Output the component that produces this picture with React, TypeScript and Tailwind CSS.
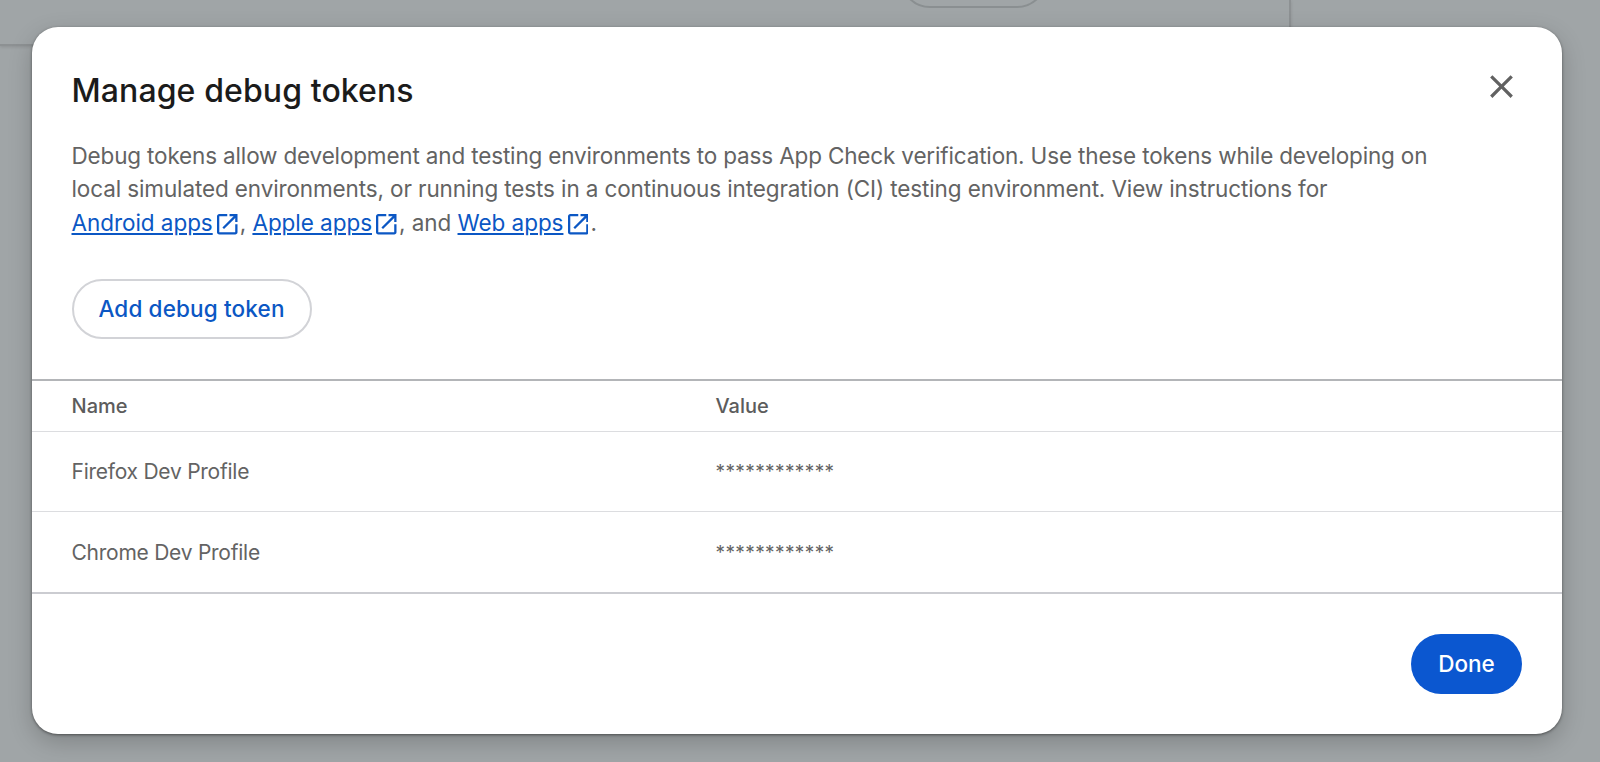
type Token = { name: string; value: string };

const tokens: Token[] = [
  { name: "Firefox Dev Profile", value: "************" },
  { name: "Chrome Dev Profile", value: "************" },
];

function OpenInNew() {
  return (
    <svg viewBox="3 3 18 18" className="mr-[2px] ml-[4.5px] inline-block size-[20.5px] fill-current align-[-4px]" aria-hidden="true">
      <path d="M19 19H5V5h7V3H5c-1.11 0-2 .9-2 2v14c0 1.1.89 2 2 2h14c1.1 0 2-.9 2-2v-7h-2v7zM14 3v2h3.59l-9.83 9.83 1.41 1.41L19 6.41V10h2V3h-7z" />
    </svg>
  );
}

function DocLink({ children }: { children: string }) {
  return (
    <a href="#" className="text-[#0b57c4]">
      <span className="underline decoration-2 underline-offset-[2px]">{children}</span>
      <OpenInNew />
    </a>
  );
}

function Backdrop() {
  return (
    <div className="absolute inset-0 flex flex-col overflow-hidden" aria-hidden="true">
      <div className="flex h-[46px] w-[1291px] justify-end border-r-2 border-b-2 border-[#8d9193] pr-[242px] shadow-[0_1px_3px_rgba(0,0,0,0.12)]">
        <div className="-mt-[52px] h-[60px] w-[147px] rounded-full border-2 border-[#8a8f91]" />
      </div>
    </div>
  );
}

export default function App() {
  return (
    <div className="relative h-[762px] w-[1600px] overflow-hidden bg-[#a0a5a7] pt-[27px] pl-8 font-['Inter',sans-serif]">
      <Backdrop />
      <section className="relative flex h-[707px] w-[1530px] flex-col rounded-[26px] bg-white shadow-[0_1px_3px_rgba(0,0,0,0.45),0_8px_24px_rgba(0,0,0,0.2)]">
        <header className="flex items-start justify-between pt-11 pr-[41px] pl-[39.5px]">
          <h1 className="text-[32px] leading-10 font-medium tracking-[0.1px] text-[#1b1b1b]">Manage debug tokens</h1>
          <button aria-label="Close" className="-mt-1 text-[#616161]">
            <svg viewBox="0 0 24 24" className="size-[39px] fill-current">
              <path d="M19 6.41 17.59 5 12 10.59 6.41 5 5 6.41 10.59 12 5 17.59 6.41 19 12 13.41 17.59 19 19 17.59 13.41 12z" />
            </svg>
          </button>
        </header>

        <p className="mt-7 px-[39.5px] text-[22.5px] leading-[33.33px] tracking-[-0.16px] whitespace-nowrap text-[#636363]">
          Debug tokens allow development and testing environments to pass App Check verification. Use these tokens while developing on
          <br />
          <span className="tracking-[-0.12px]">
            local simulated environments, or running tests in a continuous integration (CI) testing environment. View instructions for
          </span>
          <br />
          <span className="tracking-[-0.05px]">
            <DocLink>Android apps</DocLink>, <DocLink>Apple apps</DocLink>, and <DocLink>Web apps</DocLink>.
          </span>
        </p>

        <div className="mt-10 px-[39.5px]">
          <button className="flex h-[60px] w-60 items-center justify-center rounded-full border-2 border-[#d2d3d7] text-[22.5px] font-medium tracking-[0.15px] text-[#0b57c4]">
            Add debug token
          </button>
        </div>

        <div className="mt-auto border-y-2 border-t-[#b3b5b8] border-b-[#cbccd1]">
          <div className="flex h-[51px] items-center border-b border-[#dcdde0] px-[39.5px] text-xl leading-6 font-medium text-[#5c5c5c]">
            <div className="w-[644px]">Name</div>
            <div>Value</div>
          </div>
          {tokens.map((t) => (
            <div key={t.name} className="flex h-20 items-center border-b border-[#dcdde0] px-[39.5px] text-[21px] leading-[26px] text-[#636363] last:border-b-0 last:pt-px">
              <div className="w-[644px] tracking-[-0.25px]">{t.name}</div>
              <div className="text-[19px] tracking-[0.4px]">{t.value}</div>
            </div>
          ))}
        </div>

        <footer className="flex justify-end p-10">
          <button className="flex h-[60px] w-[111px] items-center justify-center rounded-full bg-[#0b57d0] text-[22.5px] font-medium text-white">
            Done
          </button>
        </footer>
      </section>
    </div>
  );
}
